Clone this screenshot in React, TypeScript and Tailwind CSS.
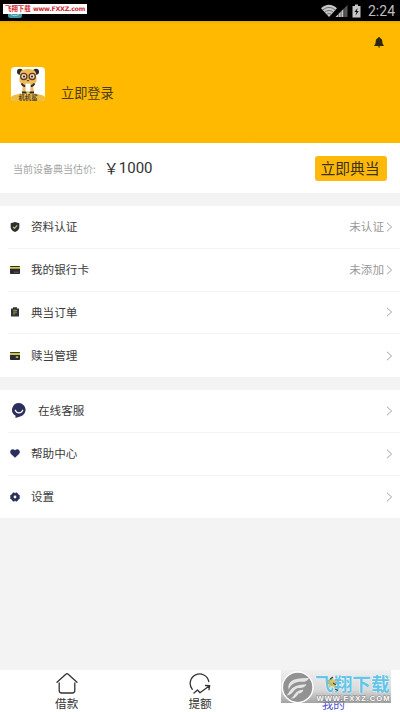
import React from "react";

type RowProps = {
  icon: React.ReactNode;
  label: string;
  status?: string;
  wide?: boolean;
  last?: boolean;
};

const ShieldIcon = () => (
  <svg width="10" height="10" viewBox="0 0 10 10">
    <path d="M5 0 9.3 1.3v4C9.3 7.6 7.2 9.3 5 10 2.8 9.3.7 7.6.7 5.3v-4z" fill="#2b2c3c" />
    <path d="M3 4.9 4.5 6.4 7.2 3.4" fill="none" stroke="#d0c93f" strokeWidth="1.2" />
  </svg>
);

const BankCardIcon = () => (
  <svg width="10" height="10" viewBox="0 0 10 10">
    <rect x="0" y="1" width="10" height="8" rx="0.8" fill="#292a36" />
    <rect x="0" y="2" width="10" height="1.7" fill="#d8d038" />
    <path d="M4 7.2h1.6M6.3 7.2h2" stroke="#8c8c94" strokeWidth="0.7" />
  </svg>
);

const OrderIcon = () => (
  <svg width="10" height="10" viewBox="0 0 10 10">
    <path d="M1 1.6h2V.3h4v1.3h2V9.6H1z" fill="#30313a" />
    <path d="M3.2 3.3h3.7M3.2 5.1h3.7M3.2 6.9h2" stroke="#b5b046" strokeWidth="0.9" />
  </svg>
);

const RedeemIcon = () => (
  <svg width="10" height="10" viewBox="0 0 10 10">
    <rect x="0" y="1" width="10" height="1.4" rx="0.4" fill="#393a3e" />
    <rect x="0" y="2.2" width="10" height="1.8" fill="#d3c737" />
    <path d="M0 4h10v4.2a.8.8 0 0 1-.8.8H.8a.8.8 0 0 1-.8-.8z" fill="#292a36" />
    <rect x="5.8" y="5.3" width="2.4" height="1.7" fill="#c4bc45" />
  </svg>
);

const ServiceIcon = () => (
  <svg width="14" height="15" viewBox="0 0 14 15">
    <path d="M7 0a7 6.8 0 0 1 1.2 13.4L3.4 15l.2-2.3A7 6.8 0 0 1 7 0z" fill="#2b2f5b" />
    <path d="M3.3 7.2c1.4 3.5 6 3.5 7.4 0" fill="none" stroke="#fff" strokeWidth="1.2" strokeLinecap="round" />
  </svg>
);

const HeartIcon = () => (
  <svg width="10" height="9" viewBox="0 0 10 9">
    <path d="M5 8.8 1 5C-1.4 2.2 2-1.6 5 1.2 8-1.6 11.4 2.2 9 5z" fill="#2b2f5b" />
  </svg>
);

const GearIcon = () => (
  <svg width="10" height="10" viewBox="0 0 10 10">
    <path d="M3 .7 5 1.2 7 .7 8.1 2.5 9.8 3.7 9.2 5l.6 1.3-1.7 1.2L7 9.3 5 8.8l-2 .5-1.1-1.8L.2 6.3.8 5 .2 3.7l1.7-1.2z" fill="#2b2f5b" stroke="#2b2f5b" strokeWidth="0.5" strokeLinejoin="round" />
    <circle cx="5" cy="5" r="1.4" fill="#fff" />
  </svg>
);

const Chevron = () => (
  <svg className="ml-[2px]" width="7" height="10" viewBox="0 0 7 10">
    <path d="M1 .8 5.6 5 1 9.2" fill="none" stroke="#a2a2a2" strokeWidth="1" />
  </svg>
);

const Row: React.FC<RowProps> = ({ icon, label, status, wide, last }) => (
  <div className={`ml-2 flex h-[42.75px] items-center pr-[7px] ${last ? "" : "border-b border-[#f3f3f3]"}`}>
    <span className={`flex shrink-0 items-center ${wide ? "ml-1 w-[26px]" : "ml-[2px] w-[21px]"}`}>{icon}</span>
    <span className="flex-1 text-[11.6px] text-[#3b3b3b]">{label}</span>
    <span className="text-[11.6px] text-[#999]">{status}</span>
    <Chevron />
  </div>
);

const StatusBar = () => (
  <div className="relative flex h-[21px] items-center justify-end bg-black pr-[5px] text-[#bdbdbd]">
    <svg className="absolute left-[8px] top-[9px]" width="14" height="9" viewBox="0 0 14 9">
      <rect width="14" height="9" rx="2" fill="#4597a8" />
      <path d="M3 5.5c2 1.5 5 1.5 8 0" fill="none" stroke="#a4d3db" />
    </svg>
    <div className="absolute left-[3px] top-[4px] flex h-[10px] w-[84px] items-center justify-between whitespace-nowrap bg-white px-[2px] text-[6.4px] font-bold leading-none text-[#d02730]">
      <span>飞翔下载</span>
      <span className="font-['DejaVu_Sans'] text-[6.3px] tracking-[-0.25px]">www.FXXZ.com</span>
    </div>
    <svg width="42" height="14" viewBox="0 0 42 14">
      <path d="M0 4.3C4.5-.4 11.5-.4 16 4.3L8 13z" fill="#c6c6c6" />
      <path d="M1.7 6.1c3.7-3.5 8.9-3.5 12.6 0M3.7 8.3c2.5-2.3 6.1-2.3 8.6 0M5.8 10.4c1.4-1.1 3-1.1 4.4 0" fill="none" stroke="#333" strokeWidth="0.6" />
      <path d="M26.5 1v12H14.5z" fill="#555" />
      <path d="M22.5 5v8h-8z" fill="#c6c6c6" />
      <path d="M17.6 8v5M20.1 6v7M22.8 4v9" stroke="#222" strokeWidth="0.6" />
      <path d="M31.5 2H34V.6h3V2h2.5v11.4h-8z" fill="#c6c6c6" />
      <path d="m36.6 4-3.2 4.1h2l-.8 3.3 3.2-4.5h-2z" fill="#111" />
    </svg>
    <span className="ml-[5px] w-[27px] pt-px font-[Roboto] text-[14px] leading-none">2:24</span>
  </div>
);

const Avatar = () => (
  <svg className="shrink-0" width="34" height="34" viewBox="0 0 34 34">
    <rect width="34" height="34" rx="4" fill="#fff" />
    <path d="M0 30c5-5 29-5 34 0v1a3 3 0 0 1-3 3H3a3 3 0 0 1-3-3z" fill="#eebd43" />
    <circle cx="9" cy="4.8" r="3" fill="#27262a" />
    <circle cx="25" cy="4.8" r="3" fill="#27262a" />
    <path d="M9 6c1-5.5 15-5.5 16 0l.6 7c0 4-3.6 5-8.6 5s-8.6-1-8.6-5z" fill="#eebc55" />
    <circle cx="12.8" cy="9.4" r="3.1" fill="#f6dfb4" stroke="#61382d" strokeWidth="1.3" />
    <circle cx="21.2" cy="9.4" r="3.1" fill="#f6dfb4" stroke="#61382d" strokeWidth="1.3" />
    <circle cx="13" cy="9.5" r="1.1" fill="#302622" />
    <circle cx="21" cy="9.5" r="1.1" fill="#302622" />
    <path d="m15.6 13 1.4 1.5 1.4-1.5z" fill="#40312a" />
    <path d="M12 17h10l1 9H11z" fill="#eebc55" />
    <path d="M10.5 16.5c1 1.9 2.5 2.6 4 2.6M23.5 16.5c-1 1.9-2.5 2.6-4 2.6M11 25.5h4.5M18.5 25.5H23" stroke="#302c2b" strokeWidth="1.8" fill="none" />
    <rect x="14.5" y="16.5" width="5" height="8" rx="1" fill="#fff" stroke="#cfc8bd" strokeWidth="0.4" />
    <text x="17" y="32.8" textAnchor="middle" fontSize="6.4" fontWeight="700" fill="#594427">
      机机鲨
    </text>
  </svg>
);

// translucent site mark lying over the last tab
const Watermark = () => (
  <div className="absolute left-[281px] top-0 h-[33px] w-[110px] bg-linear-to-b from-[#b0b0b0]/20 from-0% via-[#a0a0a0]/40 via-60% to-[#8c8c8c]/80 to-100%">
    <svg className="absolute left-0 top-[1px]" width="34" height="33" viewBox="0 0 34 33">
      <circle cx="16.7" cy="16.3" r="15.3" fill="#929292" stroke="#fff" strokeWidth="1.4" />
      <path d="M7.5 18.5C6 10 13 6.5 28 7c-1.500 3-3.500 3.800-7.500 3.800-7 0-9.500 2-13 7.700z" fill="#e4e4e4" />
      <path d="M5.500 24.500C9 22 8.500 13.500 25.500 13.300c-1.500 3-3.500 3.700-7.500 3.700-6 .3-4.500 6.500-12.500 7.500z" fill="#e4e4e4" />
      <path d="M9.500 27.500c5-2 3.500-8.500 13-8.700-1 3-2.700 3.500-5 3.600-1.700 2.700-3.500 5.300-8 5.100z" fill="#e4e4e4" />
    </svg>
    <span className="absolute left-[34px] top-[3px] whitespace-nowrap text-[18.7px] font-bold leading-[20px] text-[#63c5e8] [text-shadow:0_0_1px_#fff,0_0_1px_#fff]">
      飞翔下载
    </span>
    <svg className="absolute left-[44px] top-[4px]" width="15" height="19" viewBox="0 0 15 19">
      <path d="m7 2 1.6 4.4 4.4.4-3.5 3 1.2 4.2L7 11.8 3.4 14l1-4.2-3.2-3 4.2-.4z" fill="#d6b83c" fillOpacity="0.75" />
      <path d="M5 5.2 8 3M8 9l3 2M10 15l3 1.5" stroke="#454747" strokeWidth="1.1" />
    </svg>
    <svg className="absolute left-[35px] top-[24px]" width="75" height="9" viewBox="0 0 75 9">
      <text x="0.5" y="7" textLength="73" fontFamily="Liberation Sans" fontSize="7.6" fontWeight="700" fill="#fff" stroke="#858585" strokeWidth="1" paintOrder="stroke">
        WWW.FXXZ.COM
      </text>
    </svg>
  </div>
);

const TabBar = () => (
  <div className="relative grid h-[42px] grid-cols-3 bg-white text-[11.6px] leading-[14px] text-[#333]">
    <div className="flex flex-col items-center pt-[3px]">
      <svg width="22" height="21" viewBox="0 0 22 21" fill="none" stroke="#333" strokeWidth="1.3" strokeLinecap="round" strokeLinejoin="round">
        <path d="M1 9.3 9.8 1.2q1.2-1 2.4 0L21 9.3M3.2 9.8v7.7q0 2.5 2.5 2.5h10.6q2.5 0 2.5-2.5V9.8" />
      </svg>
      <span className="mt-[2px]">借款</span>
    </div>
    <div className="flex flex-col items-center pt-[3px]">
      <svg width="22" height="21" viewBox="0 0 22 21" fill="none" stroke="#333" strokeWidth="1.3" strokeLinecap="round" strokeLinejoin="round">
        <path d="M3.3 16.3A9.4 9.4 0 1 1 19.8 8.500M5 20l3.500-3 2.500 2.800 9.500-7M16.500 12.500l4.200.1-.7 4" />
      </svg>
      <span className="mt-[2px]">提额</span>
    </div>
    <div className="flex flex-col items-center pt-[27px] text-[#4e4ed0]">
      <span>我的</span>
    </div>
    <Watermark />
  </div>
);

const App: React.FC = () => {
  return (
    <div className="flex h-[712px] w-[400px] flex-col overflow-hidden bg-[#f3f3f3] font-['Noto_Sans_CJK_SC',sans-serif]">
      <StatusBar />

      <header className="h-[122px] bg-[#ffba00] bg-linear-to-b from-[#e7a900] from-0% to-[#ffba00] to-[3px]">
        <div className="flex h-[46px] justify-end pr-[16px] pt-[16px]">
          <svg width="10" height="11" viewBox="0 0 10 11">
            <path d="M5 0c.7 0 .8.4.9.9C7.5 1.4 8.3 2.7 8.3 4.3c0 2 .4 3.1 1.4 4v.7H.3v-.7c1-.9 1.4-2 1.4-4C1.7 2.7 2.5 1.4 4.1.9 4.2.4 4.3 0 5 0zM3.8 9.6h2.4C6 11.2 4 11.2 3.8 9.6z" fill="#2b2715" />
          </svg>
        </div>
        <div className="flex pl-[11px]">
          <Avatar />
          <span className="ml-[16px] pt-[16px] text-[13.2px] leading-5 text-[#4b3c12]">立即登录</span>
        </div>
      </header>

      <div className="flex h-[50px] items-center bg-white pl-[13px] pr-[13px]">
        <span className="text-[10px] text-[#a5a5a5]">当前设备典当估价:</span>
        <span className="ml-[8px] flex flex-1 items-center text-[15px] text-[#333]">
          <span className="w-[15px] whitespace-nowrap">￥</span>
          <span className="pt-px font-[Roboto]">1000</span>
        </span>
        <button className="h-[25px] w-[72px] rounded-[3px] bg-[#fdb90b] pr-[2px] text-[14.8px] leading-[24px] text-[#3d3212]">
          立即典当
        </button>
      </div>

      <div className="mt-[13px] bg-white">
        <Row icon={<ShieldIcon />} label="资料认证" status="未认证" />
        <Row icon={<BankCardIcon />} label="我的银行卡" status="未添加" />
        <Row icon={<OrderIcon />} label="典当订单" />
        <Row icon={<RedeemIcon />} label="赎当管理" last />
      </div>

      <div className="mt-[13px] bg-white">
        <Row icon={<ServiceIcon />} label="在线客服" wide />
        <Row icon={<HeartIcon />} label="帮助中心" />
        <Row icon={<GearIcon />} label="设置" last />
      </div>

      <div className="flex-1" />
      <TabBar />
    </div>
  );
};

export default App;
